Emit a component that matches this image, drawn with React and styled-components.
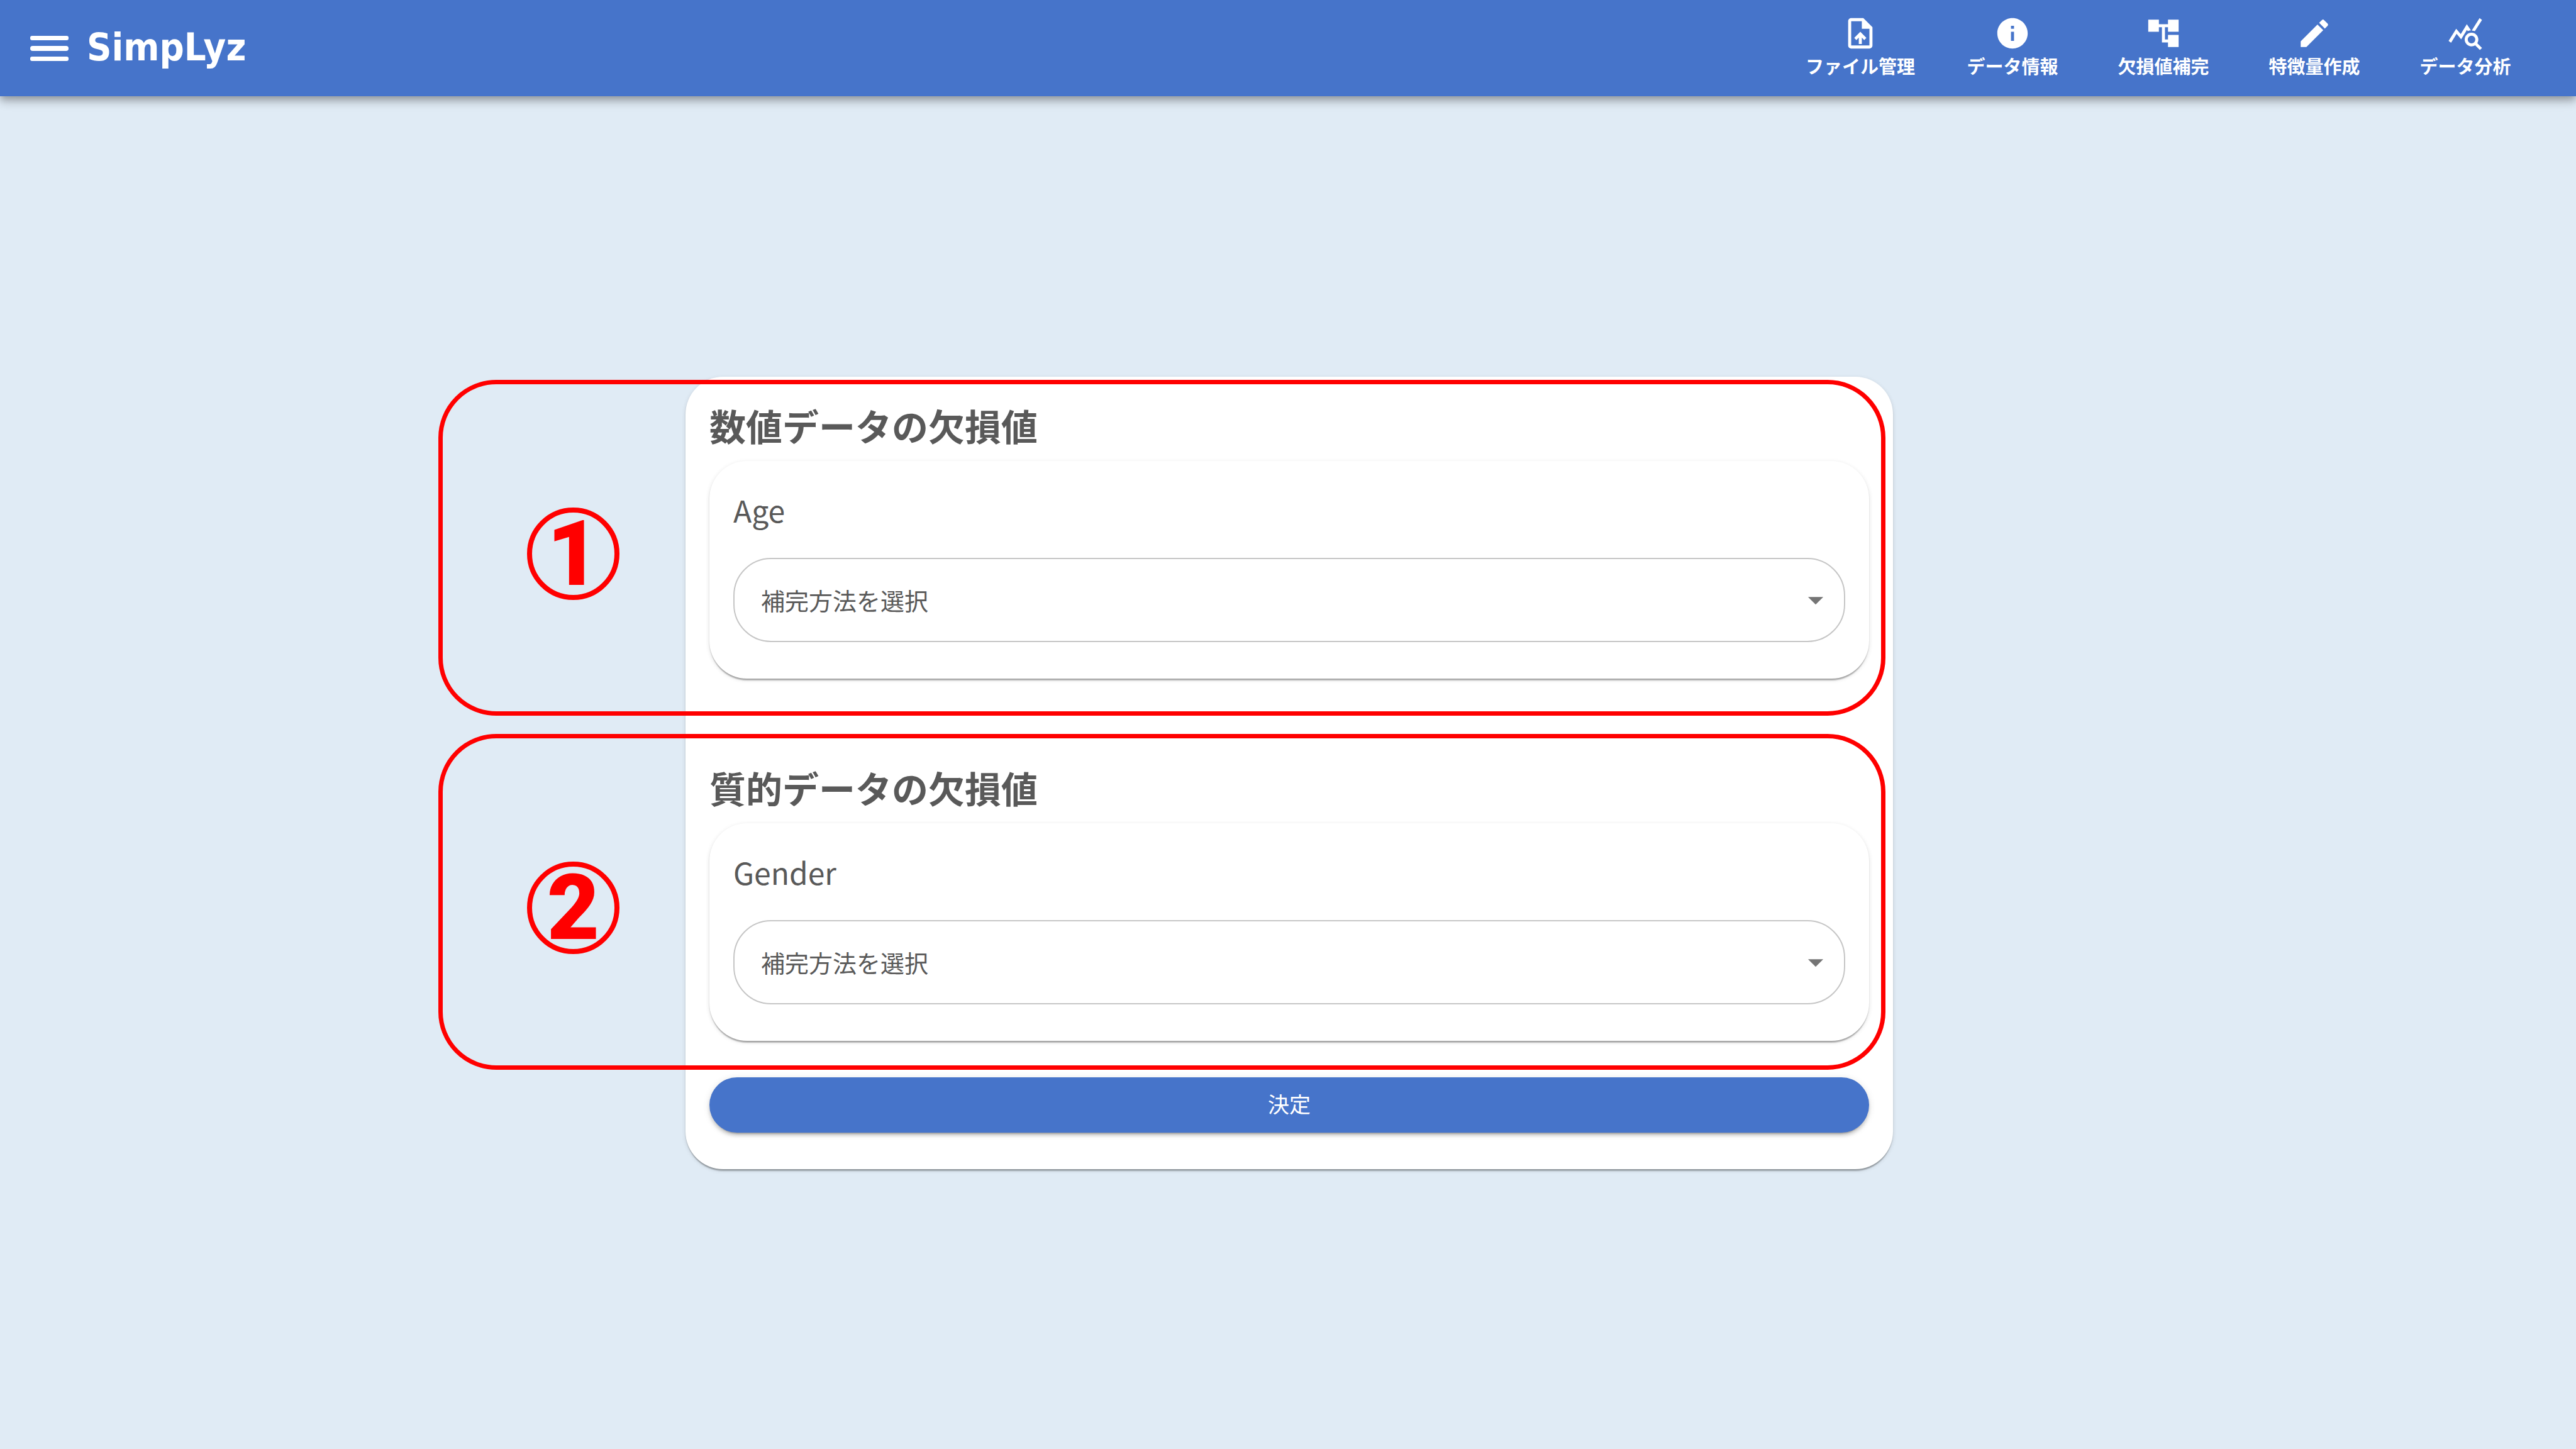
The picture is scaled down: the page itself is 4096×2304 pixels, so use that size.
import React from "react";
import styled, { createGlobalStyle } from "styled-components";
import {
  MdUploadFile,
  MdInfo,
  MdAccountTree,
  MdEdit,
  MdQueryStats,
  MdArrowDropDown,
} from "react-icons/md";

const BLUE = "#4674ca";
const TEXT = "#595959";
const RED = "#ff0000";
const FONT = `"Noto Sans CJK JP", "Noto Sans", sans-serif`;

const GlobalStyle = createGlobalStyle`
  *, *::before, *::after { box-sizing: border-box; }
  body {
    margin: 0;
    background: #e0ebf5;
    color: ${TEXT};
    font-family: ${FONT};
  }
`;

const Page = styled.div`
  min-height: 100vh;
  display: flex;
  flex-direction: column;
`;

const Header = styled.header`
  display: flex;
  align-items: center;
  justify-content: space-between;
  height: 153px;
  padding: 0 56px 0 48px;
  background: ${BLUE};
  color: #fff;
  box-shadow:
    0 5px 10px -2px rgba(0, 0, 0, 0.2),
    0 10px 12px rgba(0, 0, 0, 0.14),
    0 2px 24px rgba(0, 0, 0, 0.12);
`;

const Brand = styled.div`
  display: flex;
  align-items: center;
  gap: 29px;
`;

const MenuButton = styled.button`
  display: flex;
  padding: 0;
  border: 0;
  background: none;
  color: inherit;
  cursor: pointer;
`;

const BrandName = styled.a`
  padding-bottom: 4px;
  color: inherit;
  text-decoration: none;
  font-family: "DejaVu Sans Condensed", "DejaVu Sans", sans-serif;
  font-size: 61px;
  font-weight: 700;
  line-height: 72px;
`;

const Nav = styled.nav`
  display: flex;
`;

const NavLink = styled.a`
  display: flex;
  flex-direction: column;
  align-items: center;
  min-width: 240px;
  padding: 0 35px 4px;
  color: inherit;
  text-decoration: none;
  font-size: 29px;
  font-weight: 700;
  line-height: 44px;
  white-space: nowrap;

  svg {
    width: 58px;
    height: 58px;
  }
`;

const Main = styled.main`
  flex: 1;
  display: flex;
  align-items: center;
  justify-content: center;
  padding-left: 4px;
`;

const Card = styled.form`
  position: relative;
  display: flex;
  flex-direction: column;
  width: 1920px;
  padding: 38px 38px 58px;
  border-radius: 60px;
  background: #fff;
  box-shadow:
    0 5px 2px -2px rgba(0, 0, 0, 0.2),
    0 2px 2px rgba(0, 0, 0, 0.14),
    0 2px 7px rgba(0, 0, 0, 0.12);
`;

const Section = styled.section`
  & + & {
    margin-top: 134px;
  }
`;

const SectionTitle = styled.h2`
  margin: 0 0 18px;
  font-size: 58px;
  font-weight: 700;
  line-height: 78px;
`;

const FieldCard = styled.div`
  padding: 38px 38px 58px;
  border-radius: 60px;
  background: #fff;
  box-shadow:
    0 5px 2px -2px rgba(0, 0, 0, 0.2),
    0 2px 2px rgba(0, 0, 0, 0.14),
    0 2px 7px rgba(0, 0, 0, 0.12);
`;

const FieldLabel = styled.label`
  display: block;
  margin-bottom: 38px;
  font-size: 48px;
  line-height: 78px;
`;

const SelectBox = styled.div`
  display: grid;
  align-items: center;

  > * {
    grid-area: 1 / 1;
  }

  svg {
    justify-self: end;
    width: 58px;
    height: 58px;
    margin-right: 18px;
    color: #757575;
    pointer-events: none;
  }
`;

const Select = styled.select`
  appearance: none;
  width: 100%;
  height: 134px;
  padding: 0 80px 0 42px;
  border: 2px solid #c6c6c6;
  border-radius: 60px;
  background: #fff;
  color: ${TEXT};
  font-family: ${FONT};
  font-size: 38px;
`;

const SubmitButton = styled.button`
  height: 88px;
  margin-top: 58px;
  padding: 0 38px 4px;
  border: 0;
  border-radius: 44px;
  background: ${BLUE};
  color: #fff;
  font-family: ${FONT};
  font-size: 34px;
  line-height: 60px;
  cursor: pointer;
  box-shadow:
    0 7px 2px -5px rgba(0, 0, 0, 0.2),
    0 5px 5px rgba(0, 0, 0, 0.14),
    0 2px 12px rgba(0, 0, 0, 0.12);
`;

/* Callout frame laid over the card, reaching out past its left edge. */
const Callout = styled.div`
  position: absolute;
  top: ${(p) => p.$top}px;
  left: -393px;
  right: 12px;
  height: 534px;
  display: flex;
  align-items: center;
  padding: 20px 0 0 134px;
  border: 7px solid ${RED};
  border-radius: 92px;
  pointer-events: none;
`;

const CalloutNumber = styled.span`
  display: flex;
  align-items: center;
  justify-content: center;
  width: 147px;
  height: 147px;
  border: 8px solid ${RED};
  border-radius: 50%;
  color: ${RED};
  font-family: Roboto, sans-serif;
  font-size: 144px;
  font-weight: 900;
  line-height: 131px;
`;

const MenuIcon = () => (
  <svg width="61" height="40" viewBox="0 0 61 40" fill="currentColor" aria-hidden="true">
    <rect x="0" y="0" width="61" height="7" rx="3" />
    <rect x="0" y="16" width="61" height="8" rx="4" />
    <rect x="0" y="33" width="61" height="7" rx="3" />
  </svg>
);

const NAV_ITEMS = [
  { label: "ファイル管理", Icon: MdUploadFile },
  { label: "データ情報", Icon: MdInfo },
  { label: "欠損値補完", Icon: MdAccountTree },
  { label: "特徴量作成", Icon: MdEdit },
  { label: "データ分析", Icon: MdQueryStats },
];

const GROUPS = [
  { title: "数値データの欠損値", column: "Age" },
  { title: "質的データの欠損値", column: "Gender" },
];

const CALLOUTS = [
  { number: 1, top: 5 },
  { number: 2, top: 568 },
];

export default function App() {
  return (
    <>
      <GlobalStyle />
      <Page>
        <Header>
          <Brand>
            <MenuButton type="button" aria-label="メニュー">
              <MenuIcon />
            </MenuButton>
            <BrandName href="#">SimpLyz</BrandName>
          </Brand>
          <Nav>
            {NAV_ITEMS.map(({ label, Icon }) => (
              <NavLink key={label} href="#">
                <Icon />
                {label}
              </NavLink>
            ))}
          </Nav>
        </Header>
        <Main>
          <Card onSubmit={(e) => e.preventDefault()}>
            {GROUPS.map(({ title, column }) => (
              <Section key={column}>
                <SectionTitle>{title}</SectionTitle>
                <FieldCard>
                  <FieldLabel htmlFor={column}>{column}</FieldLabel>
                  <SelectBox>
                    <Select id={column} defaultValue="">
                      <option value="">補完方法を選択</option>
                    </Select>
                    <MdArrowDropDown aria-hidden="true" />
                  </SelectBox>
                </FieldCard>
              </Section>
            ))}
            <SubmitButton type="submit">決定</SubmitButton>
            {CALLOUTS.map(({ number, top }) => (
              <Callout key={number} $top={top}>
                <CalloutNumber>{number}</CalloutNumber>
              </Callout>
            ))}
          </Card>
        </Main>
      </Page>
    </>
  );
}
